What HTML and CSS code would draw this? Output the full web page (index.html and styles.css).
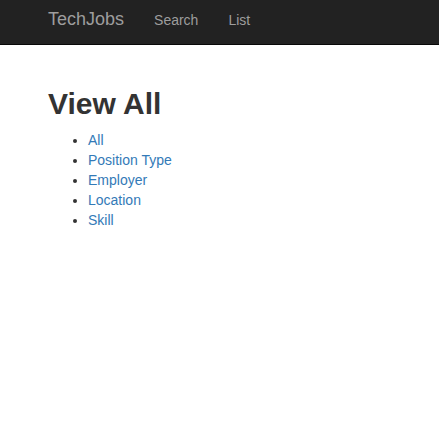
FILE: index.html
```html
<!DOCTYPE html>
<html>
<head>
<meta charset="utf-8">
<title>TechJobs</title>
<link rel="stylesheet" href="styles.css">
</head>
<body>
<nav class="navbar">
  <div class="navbar-inner">
    <a class="brand" href="#">TechJobs</a>
    <ul class="nav-links">
      <li><a href="#">Search</a></li>
      <li><a href="#">List</a></li>
    </ul>
  </div>
</nav>
<main class="content">
  <h2 class="title">View All</h2>
  <ul class="choices">
    <li><a href="#">All</a></li>
    <li><a href="#">Position Type</a></li>
    <li><a href="#">Employer</a></li>
    <li><a href="#">Location</a></li>
    <li><a href="#">Skill</a></li>
  </ul>
</main>
</body>
</html>
```

FILE: styles.css
```css
html, body {
  margin: 0;
  padding: 0;
  background: #fff;
}
body {
  font-family: "Liberation Sans", Arial, Helvetica, sans-serif;
  font-size: 14px;
  line-height: 20px;
  color: #333;
}
a {
  text-decoration: none;
}
.navbar {
  background: #222;
  border-bottom: 1px solid #080808;
  height: 44px;
}
.navbar-inner {
  display: flex;
  align-items: flex-start;
  padding: 0 33px;
  height: 100%;
}
.brand {
  display: block;
  padding: 9px 15px 0;
  font-size: 18px;
  line-height: 20px;
  color: #9d9d9d;
}
.nav-links {
  display: flex;
  list-style: none;
  margin: 0;
  padding: 0;
}
.nav-links a {
  display: block;
  padding: 10px 15px 0;
  font-size: 14px;
  line-height: 20px;
  color: #9d9d9d;
}
.content {
  padding: 0 48px;
}
.title {
  font-size: 30px;
  font-weight: bold;
  line-height: 33px;
  margin: 42px 0 10px;
  color: #333;
}
.choices {
  margin: 0 0 10px;
  padding-left: 40px;
}
.choices a {
  color: #337ab7;
}
```
